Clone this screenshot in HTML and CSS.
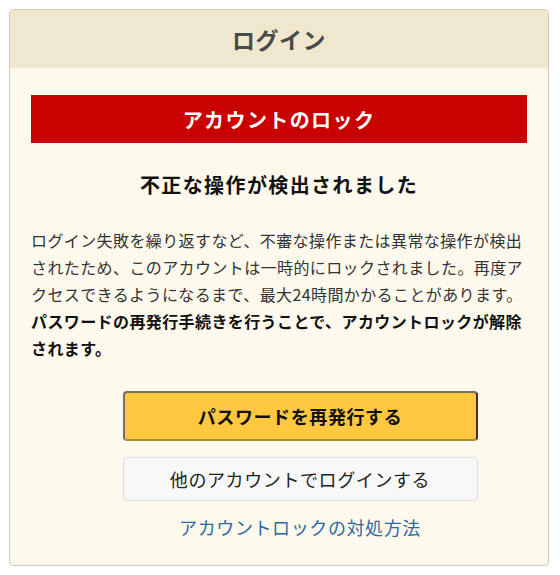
FILE: index.html
```html
<!DOCTYPE html>
<html lang="ja">
<head>
    <meta charset="UTF-8">
    <meta name="viewport" content="width=device-width, initial-scale=1.0">
    <title>ログイン</title>
    <link rel="stylesheet" href="styles.css">
</head>
<body>
    <div class="card">
        <div class="card-header">ログイン</div>
        <div class="card-body">
            <h2 class="banner">アカウントのロック</h2>
            <h3 class="title">不正な操作が検出されました</h3>
            <p class="message">ログイン失敗を繰り返すなど、不審な操作または異常な操作が検出されたため、このアカウントは一時的にロックされました。再度アクセスできるようになるまで、最大24時間かかることがあります。<strong>パスワードの再発行手続きを行うことで、アカウントロックが解除されます。</strong></p>

            <div class="actions">
                <a href="javascript:void(0)" class="btn btn-primary">パスワードを再発行する</a>
                <a href="javascript:void(0)" class="btn btn-secondary">他のアカウントでログインする</a>
                <a href="javascript:void(0)" class="help-link">アカウントロックの対処方法</a>
            </div>
        </div>
    </div>
</body>
</html>
```

FILE: styles.css
```css
body {
    margin: 0;
    padding: 9px 11px 10px 9px;
    background-color: white;
    font-family: "Noto Sans CJK JP", "Noto Sans", sans-serif;
    color: #222;
}

.card {
    border: 1px solid #cfcbc0;
    border-radius: 4px;
    background-color: #fdf9ec;
    overflow: hidden;
}

.card-header {
    background-color: #efe8cf;
    height: 58px;
    display: flex;
    align-items: center;
    justify-content: center;
    font-size: 23px;
    font-weight: bold;
    color: #4a4a4a;
    letter-spacing: 0.5px;
}

.card-body {
    padding: 27px 21px 25px 21px;
}

.banner {
    margin: 0;
    height: 48px;
    background-color: #c80000;
    color: white;
    font-size: 20px;
    letter-spacing: 1.4px;
    display: flex;
    align-items: center;
    justify-content: center;
}

.title {
    margin: 27px 0 0 0;
    text-align: center;
    font-size: 20px;
    letter-spacing: 1.4px;
    line-height: 30px;
    color: #111;
}

.message {
    margin: 27px 0 0 0;
    font-size: 16px;
    letter-spacing: 0.4px;
    line-height: 27px;
    color: #333;
}

.message strong {
    color: #111;
}

.actions {
    display: flex;
    flex-direction: column;
    align-items: center;
    padding-left: 42px;
    margin-top: 29px;
}

.btn {
    box-sizing: border-box;
    width: 355px;
    display: flex;
    align-items: center;
    justify-content: center;
    text-decoration: none;
    border-radius: 4px;
    font-size: 18px;
    letter-spacing: 0.6px;
}

.btn-primary {
    height: 50px;
    background-color: #ffc83f;
    border: 2px solid #77705e;
    border-right-color: #3d3220;
    border-bottom-color: #b08f32;
    color: #111;
    font-weight: bold;
}

.btn-secondary {
    height: 44px;
    margin-top: 16px;
    background-color: #f8f8f8;
    border: 1px solid #dcdcdc;
    color: #222;
}

.help-link {
    margin-top: 13px;
    font-size: 18px;
    letter-spacing: 0.6px;
    color: #2d68a0;
    text-decoration: none;
}
```
